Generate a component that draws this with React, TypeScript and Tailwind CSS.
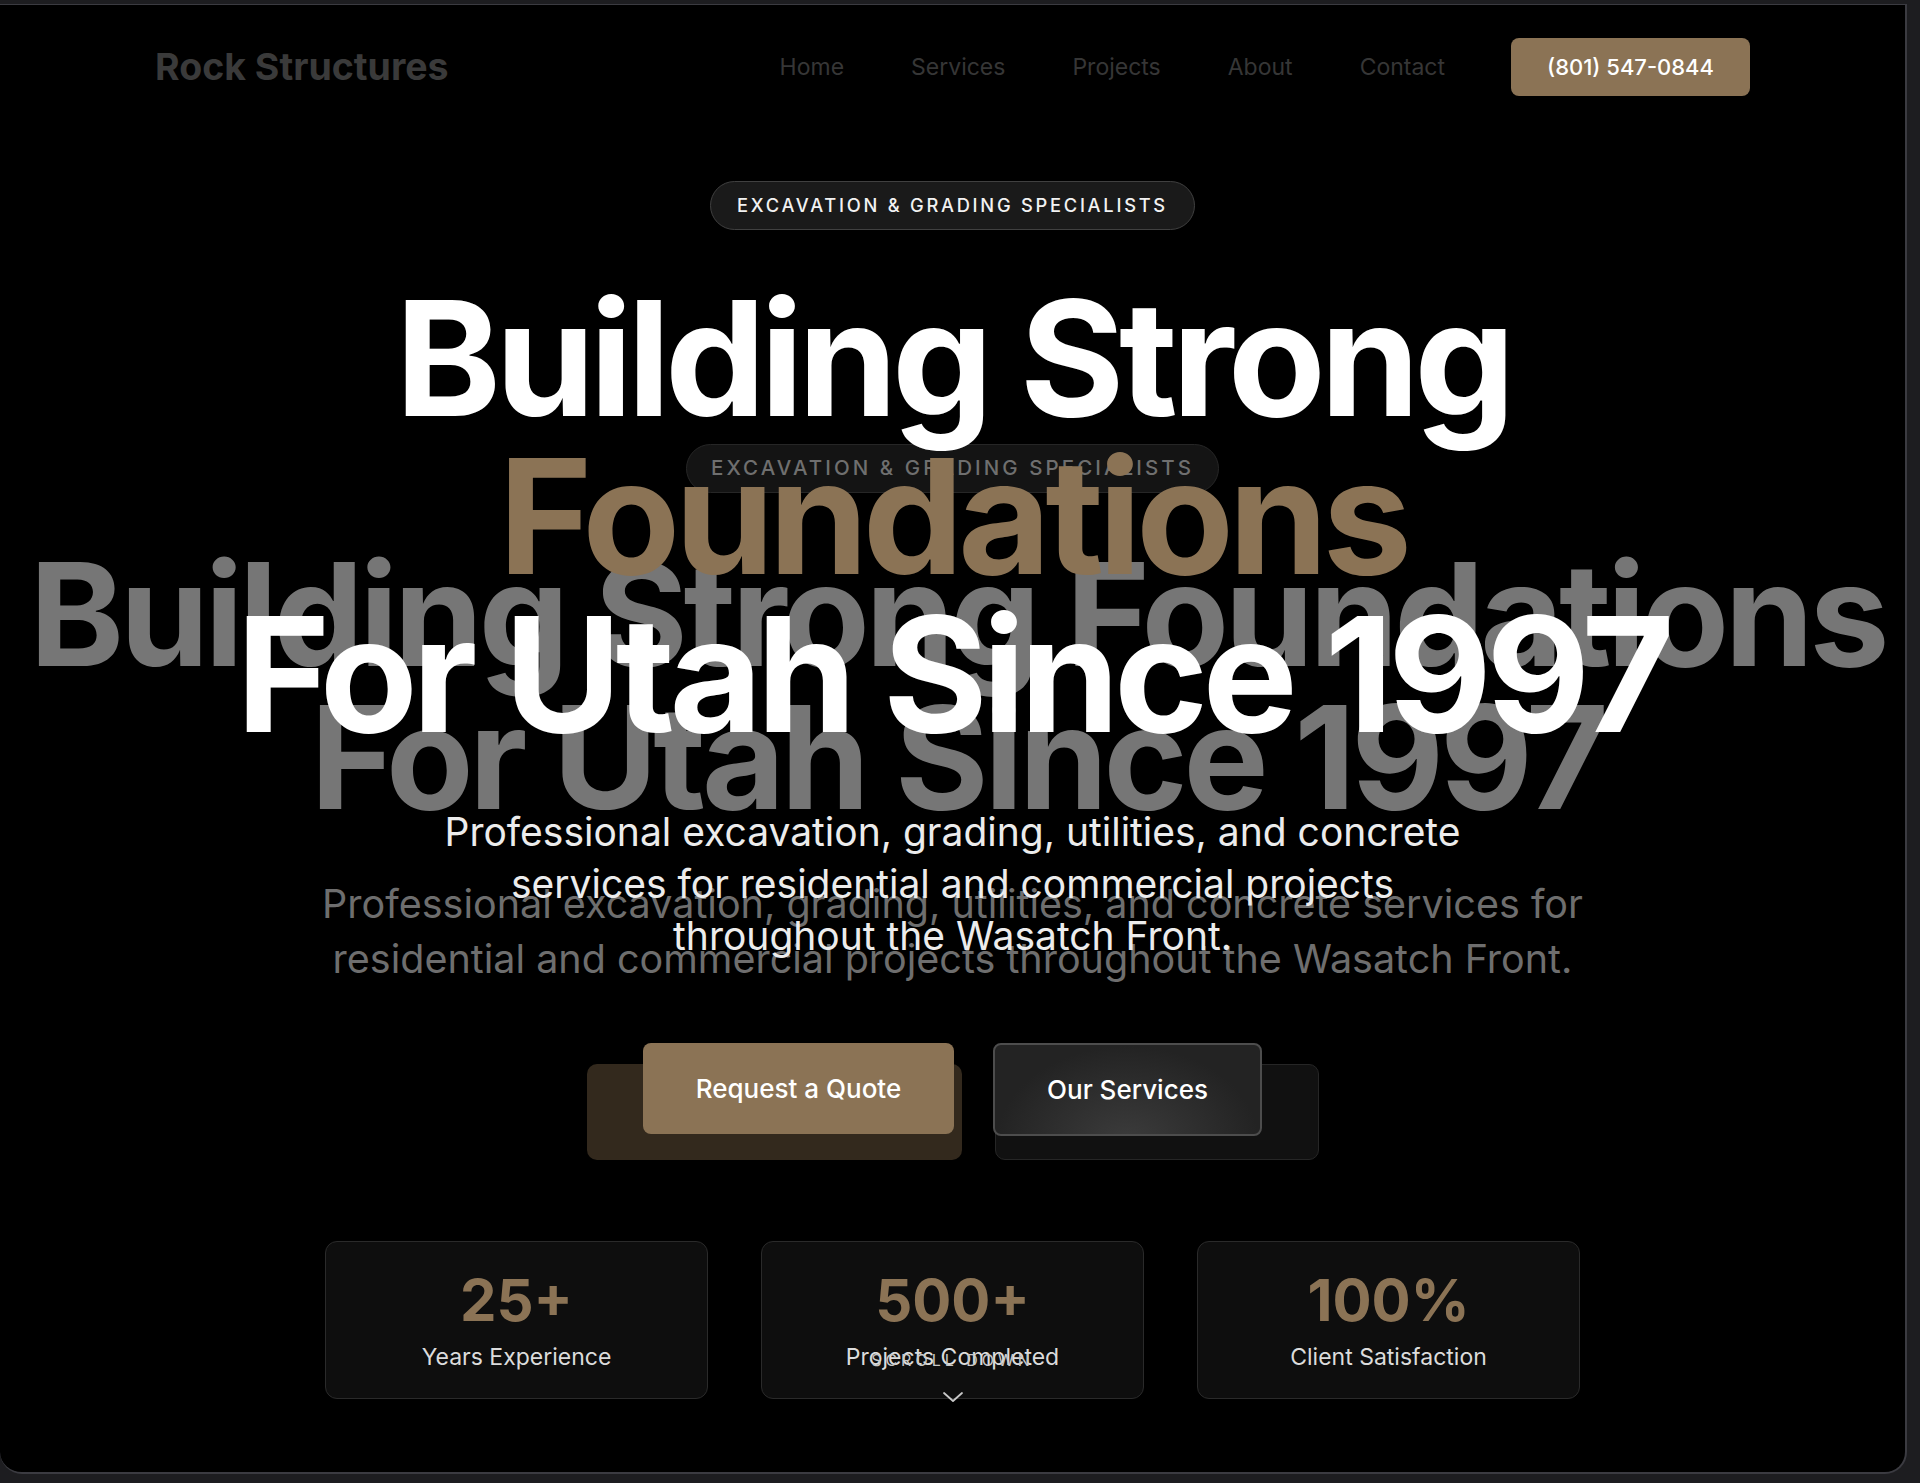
const navLinks = ["Home", "Services", "Projects", "About", "Contact"];

const stats = [
  { value: "25+", label: "Years Experience" },
  { value: "500+", label: "Projects Completed" },
  { value: "100%", label: "Client Satisfaction" },
];

const GhostLayer = () => (
  <div className="absolute inset-0 flex flex-col items-center pointer-events-none select-none">
    <div className="mt-[439px] h-[49px] flex items-center px-[24px] rounded-full bg-[#141414] border border-[#262626]">
      <span className="text-[20.5px] font-medium uppercase tracking-[0.15em] text-[#6f6f6f]">
        Excavation &amp; Grading Specialists
      </span>
    </div>
    <h2 className="mt-[49px] ml-[10px] text-center text-[143px] leading-[143px] font-bold tracking-[-0.03em] text-[#767676] whitespace-nowrap">
      Building Strong Foundations
      <br />
      For Utah Since 1997
    </h2>
    <p className="mt-[49px] max-w-[1320px] text-center text-[39.5px] leading-[55px] text-[#6e6e6e]">
      Professional excavation, grading, utilities, and concrete services for residential and
      commercial projects throughout the Wasatch Front.
    </p>
    <div className="mt-[77px] flex gap-[33px]">
      <div className="w-[375px] h-[96px] rounded-[10px] bg-[#33291d]" />
      <div className="w-[324px] h-[96px] rounded-[10px] bg-[#111111] border border-[#262626]" />
    </div>
  </div>
);

const StatCard = (props: { value: string; label: string }) => {
  const { value, label } = props;
  return (
    <div className="w-[383px] h-[158px] rounded-[12px] bg-[#0e0e0e] border border-[#2a2a2a] flex flex-col items-center pt-[28px]">
      <div className="text-[58px] leading-[60px] font-bold text-[#8b7355]">{value}</div>
      <div className="mt-[10px] text-[23px] text-[#dcdcdc]">{label}</div>
    </div>
  );
};

export default function App() {
  return (
    <div
      className="w-full h-[1483px] bg-[#1d1d20] pt-[4px] overflow-hidden"
      style={{ fontFamily: "Inter, 'Noto Sans', sans-serif" }}
    >
      <div className="relative w-[1907px] h-[1470px] bg-black border-t border-r-2 border-b-2 border-[#3b3b41] rounded-b-[22px] overflow-hidden">
        <GhostLayer />

        <div className="relative flex flex-col items-center">
          <header className="w-[1595px] h-[124px] flex items-center justify-between">
            <div className="text-[37.5px] font-bold text-[#3a3a3a]">Rock Structures</div>
            <nav className="flex items-center">
              <ul className="flex items-center gap-[67px] mr-[66px]">
                {navLinks.map((link) => (
                  <li key={link} className="text-[23px] text-[#363636]">
                    {link}
                  </li>
                ))}
              </ul>
              <button className="h-[58px] px-[36px] rounded-[8px] bg-[#8b7355] text-[22px] font-medium text-white">
                (801) 547-0844
              </button>
            </nav>
          </header>

          <div className="mt-[52px] h-[49px] flex items-center px-[26px] rounded-full bg-[#1a1a1a] border border-[#404040]">
            <span className="text-[18.3px] font-medium uppercase tracking-[0.15em] text-[#f2f2f2]">
              Excavation &amp; Grading Specialists
            </span>
          </div>

          <h1 className="mt-[49px] text-center text-[160px] leading-[158px] font-bold tracking-[-0.035em] text-white whitespace-nowrap">
            Building Strong
            <br />
            <span className="text-[#8b7355]">Foundations</span>
            <br />
            For Utah Since 1997
          </h1>

          <p className="mt-[53px] max-w-[1040px] text-center text-[39px] leading-[52px] text-[#ececec]">
            Professional excavation, grading, utilities, and concrete services for residential and
            commercial projects throughout the Wasatch Front.
          </p>

          <div className="mt-[81px] flex gap-[39px]">
            <button className="w-[311px] h-[91px] rounded-[8px] bg-[#8b7355] text-[26px] font-medium text-white">
              Request a Quote
            </button>
            <button className="w-[269px] h-[93px] rounded-[8px] border-2 border-[#4d4d4d] bg-[radial-gradient(ellipse_at_50%_110%,#3c3c3c,#232323_70%)] text-[26px] font-medium text-white">
              Our Services
            </button>
          </div>

          <div className="mt-[105px] flex gap-[53px]">
            {stats.map((s) => (
              <StatCard key={s.label} value={s.value} label={s.label} />
            ))}
          </div>
        </div>

        <div className="absolute left-0 right-0 top-[1343px] flex flex-col items-center text-[#c8c8c8]">
          <span className="text-[16px] uppercase tracking-[0.25em]">Scroll Down</span>
          <svg width="22" height="12" viewBox="0 0 22 12" fill="none" className="mt-[19px]">
            <path d="M2 2 L11 10 L20 2" stroke="currentColor" strokeWidth="1.8" strokeLinecap="round" strokeLinejoin="round" />
          </svg>
        </div>
      </div>
    </div>
  );
}
